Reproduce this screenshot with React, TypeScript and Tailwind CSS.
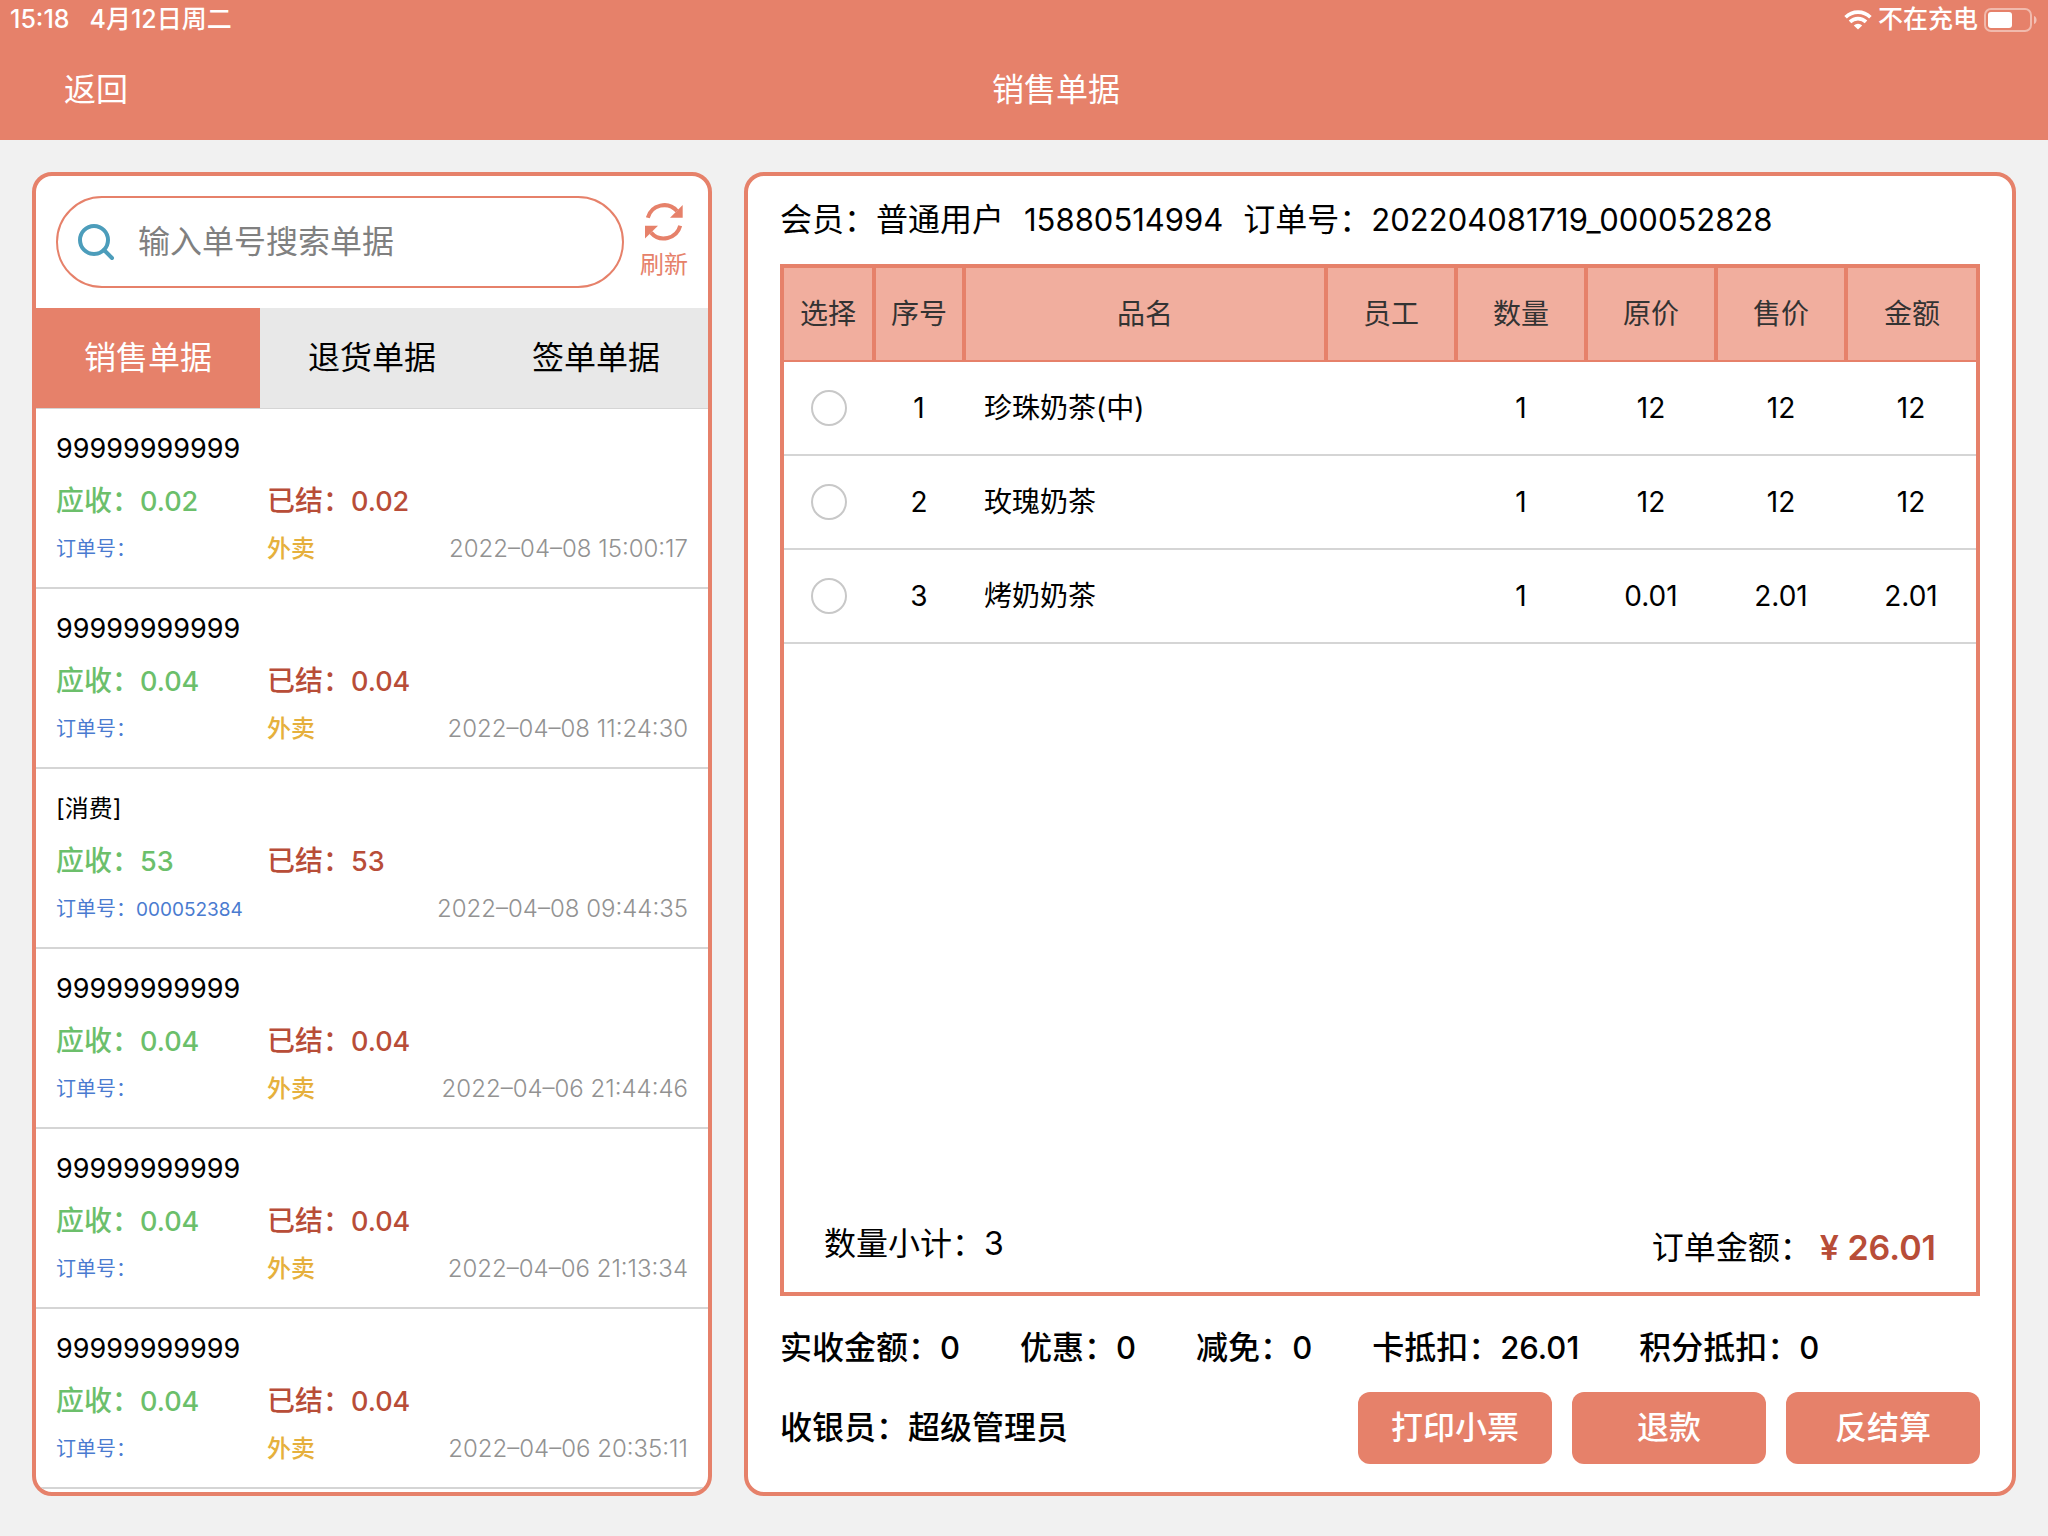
const receipts = [
    { title: "99999999999", due: "0.02", paid: "0.02", orderNo: "", tag: "外卖", time: "2022–04–08 15:00:17" },
    { title: "99999999999", due: "0.04", paid: "0.04", orderNo: "", tag: "外卖", time: "2022–04–08 11:24:30" },
    { title: "[消费]", due: "53", paid: "53", orderNo: "000052384", tag: "", time: "2022–04–08 09:44:35" },
    { title: "99999999999", due: "0.04", paid: "0.04", orderNo: "", tag: "外卖", time: "2022–04–06 21:44:46" },
    { title: "99999999999", due: "0.04", paid: "0.04", orderNo: "", tag: "外卖", time: "2022–04–06 21:13:34" },
    { title: "99999999999", due: "0.04", paid: "0.04", orderNo: "", tag: "外卖", time: "2022–04–06 20:35:11" },
];

const items = [
    { no: 1, name: "珍珠奶茶(中)", qty: "1", price: "12", sale: "12", amount: "12" },
    { no: 2, name: "玫瑰奶茶", qty: "1", price: "12", sale: "12", amount: "12" },
    { no: 3, name: "烤奶奶茶", qty: "1", price: "0.01", sale: "2.01", amount: "2.01" },
];

const columns = [
    { label: "选择", width: "w-[90px]" },
    { label: "序号", width: "w-[90px]" },
    { label: "品名", width: "w-auto" },
    { label: "员工", width: "w-[130px]" },
    { label: "数量", width: "w-[130px]" },
    { label: "原价", width: "w-[130px]" },
    { label: "售价", width: "w-[130px]" },
    { label: "金额", width: "w-[130px]" },
];

const totals = [
    ["实收金额", "0"],
    ["优惠", "0"],
    ["减免", "0"],
    ["卡抵扣", "26.01"],
    ["积分抵扣", "0"],
];

function WifiIcon() {
    return (
        <svg width="28" height="20" viewBox="0 0 28 20" fill="none" stroke="white" strokeWidth="3.6" aria-hidden="true">
            <path d="M1.6 7.2a17.6 17.6 0 0 1 24.8 0" />
            <path d="M6 11.9a11.4 11.4 0 0 1 16 0" />
            <path d="M9.8 15.4a6.2 6.2 0 0 1 8.4 0L14 19.6Z" fill="white" stroke="none" />
        </svg>
    );
}

function BatteryIcon() {
    return (
        <svg width="54" height="24" viewBox="0 0 54 24" fill="none" aria-hidden="true">
            <rect x="1" y="1" width="46" height="22" rx="6" stroke="white" strokeOpacity="0.45" strokeWidth="2" />
            <rect x="4" y="4" width="24" height="16" rx="3" fill="white" />
            <path d="M50 8c3.4 1 3.4 7 0 8Z" fill="white" fillOpacity="0.5" />
        </svg>
    );
}

function SearchIcon() {
    return (
        <svg width="40" height="40" viewBox="0 0 40 40" fill="none" stroke="#4c9dbb" strokeWidth="4" aria-hidden="true">
            <circle cx="16" cy="18" r="14" />
            <path d="M26 28l8 8" strokeLinecap="round" />
        </svg>
    );
}

function RefreshIcon() {
    return (
        <svg width="38" height="38" viewBox="0 0 38 38" fill="none" stroke="#e6816a" strokeWidth="4" aria-hidden="true">
            <path d="M2.8 14.8A17 17 0 0 1 32 8" />
            <path d="M37.7 2v12.8H25Z" fill="#e6816a" stroke="none" />
            <path d="M35.2 22.8A17 17 0 0 1 6 29.6" />
            <path d="M0 35.6V22.8h13Z" fill="#e6816a" stroke="none" />
        </svg>
    );
}

function Header() {
    return (
        <header className="h-[140px] bg-[#e6816a] text-white">
            <div className="flex h-10 items-center justify-between px-2.5 text-[25px] font-medium">
                <div className="flex gap-5">
                    <span>15:18</span>
                    <span>4月12日周二</span>
                </div>
                <div className="flex items-center gap-1.5">
                    <WifiIcon />
                    <span>不在充电</span>
                    <BatteryIcon />
                </div>
            </div>
            <div className="grid h-[100px] grid-cols-[1fr_auto_1fr] items-center pl-16 text-[32px]">
                <button type="button" className="justify-self-start">返回</button>
                <h1>销售单据</h1>
            </div>
        </header>
    );
}

function ReceiptList() {
    return (
        <section className="flex w-[680px] flex-none flex-col overflow-hidden rounded-[20px] border-4 border-[#e6816a] bg-white">
            <div className="flex items-center gap-4 p-5">
                <label className="flex h-[92px] min-w-0 flex-1 items-center gap-5 rounded-full border-2 border-[#e6816a] px-5">
                    <SearchIcon />
                    <input
                        type="text"
                        aria-label="搜索单据"
                        placeholder="输入单号搜索单据"
                        className="min-w-0 flex-1 bg-transparent text-[32px] outline-none placeholder:text-[#808080]"
                    />
                </label>
                <button type="button" className="flex w-12 flex-none flex-col items-center gap-2 text-2xl text-[#e6816a]">
                    <RefreshIcon />
                    刷新
                </button>
            </div>
            <nav className="grid h-[101px] flex-none grid-cols-3 border-b border-[#d5d5d5] bg-[#e8e8e8] text-[32px]">
                <button type="button" className="bg-[#e6816a] text-white">销售单据</button>
                <button type="button">退货单据</button>
                <button type="button">签单单据</button>
            </nav>
            <ul>
                {receipts.map(r => (
                    <li key={r.time} className="h-[180px] border-b-2 border-[#d5d5d5] px-5 pt-5">
                        <p className={r.title.startsWith("[") ? "h-10 text-2xl leading-10" : "h-10 text-[27px] leading-10"}>{r.title}</p>
                        <div className="grid h-16 grid-cols-[211px_1fr] items-center text-[28px] font-medium">
                            <span className="text-[#6cbf6b]">应收：<span className="text-[27px]">{r.due}</span></span>
                            <span className="text-[#b84d38]">已结：<span className="text-[27px]">{r.paid}</span></span>
                        </div>
                        <div className="flex h-8 items-center justify-between text-2xl">
                            <span className="w-[211px] text-xl text-[#4a7bd0]">订单号：<span className="text-[19px]">{r.orderNo}</span></span>
                            <span className="flex-1 font-medium text-[#e6b03c]">{r.tag}</span>
                            <time className="font-light text-[#929292]">{r.time}</time>
                        </div>
                    </li>
                ))}
            </ul>
        </section>
    );
}

function ItemTable() {
    return (
        <div className="flex flex-1 flex-col border-4 border-[#e6816a]">
            <table className="w-full table-fixed border-collapse text-center text-[28px]">
                <thead>
                    <tr className="h-[93px] border-b-2 border-[#e6816a] bg-[#f1ae9e] text-[#333]">
                        {columns.map(c => (
                            <th key={c.label} className={`${c.width} border-r-4 border-[#e6816a] font-normal last:border-r-0`}>{c.label}</th>
                        ))}
                    </tr>
                </thead>
                <tbody>
                    {items.map(item => (
                        <tr key={item.no} className="h-[94px] border-b-2 border-[#d5d5d5]">
                            <td>
                                <input
                                    type="radio"
                                    name="item"
                                    aria-label={item.name}
                                    className="mx-auto block size-9 appearance-none rounded-full border-2 border-[#c8c8c8] checked:bg-[#e6816a]"
                                />
                            </td>
                            <td>{item.no}</td>
                            <td className="pl-5 text-left">{item.name}</td>
                            <td></td>
                            <td>{item.qty}</td>
                            <td>{item.price}</td>
                            <td>{item.sale}</td>
                            <td>{item.amount}</td>
                        </tr>
                    ))}
                </tbody>
            </table>
            <div className="mt-auto flex items-start justify-between px-10 pb-4 text-[32px]">
                <span>数量小计：3</span>
                <span className="flex items-center gap-2 leading-[56px]">
                    订单金额：
                    <strong className="text-[34px] font-semibold text-[#b84d38]">¥ 26.01</strong>
                </span>
            </div>
        </div>
    );
}

function ReceiptDetail() {
    return (
        <section className="flex min-w-0 flex-1 flex-col rounded-[20px] border-4 border-[#e6816a] bg-white px-8 pb-7">
            <div className="flex h-[88px] items-center gap-5 text-[32px]">
                <span>会员：普通用户</span>
                <span className="text-[31px]">15880514994</span>
                <span>订单号：<span className="text-[31px]">202204081719_000052828</span></span>
            </div>
            <ItemTable />
            <div className="flex h-24 items-center gap-[60px] pt-2 text-[32px] font-medium">
                {totals.map(([label, value]) => (
                    <span key={label}>{label}：<span className="text-[31px]">{value}</span></span>
                ))}
            </div>
            <div className="flex items-center gap-5 text-[32px] font-medium">
                <span className="flex-1">收银员：超级管理员</span>
                {["打印小票", "退款", "反结算"].map(action => (
                    <button key={action} type="button" className="h-[72px] w-[194px] rounded-xl bg-[#e6816a] text-white">{action}</button>
                ))}
            </div>
        </section>
    );
}

export default function App() {
    return (
        <div className="flex min-h-screen flex-col bg-[#f1f1f1] font-[Inter,'Noto_Sans_CJK_SC',sans-serif] text-black">
            <Header />
            <main className="flex flex-1 gap-8 px-8 pt-8 pb-10">
                <ReceiptList />
                <ReceiptDetail />
            </main>
        </div>
    );
}
